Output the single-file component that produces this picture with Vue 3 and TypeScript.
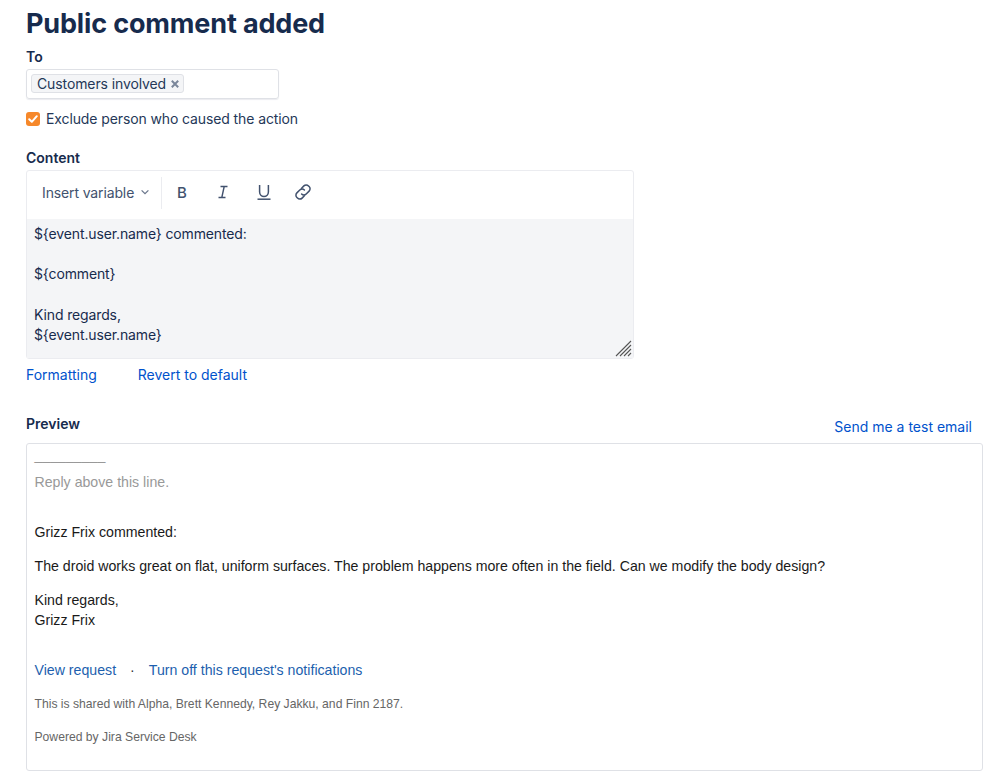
<script setup lang="ts">
const templateLines: string[] = ['${event.user.name} commented:', '', '${comment}', '', 'Kind regards,', '${event.user.name}']
</script>

<template>
  <main class="page">
    <h1 class="title">Public comment added</h1>

    <label class="label to-label">To</label>
    <div class="to-box">
      <span class="tag">Customers involved
        <svg class="tag-x" width="10" height="10" viewBox="0 0 10 10"><path d="M1.8 1.8l6.4 6.4M8.2 1.8l-6.4 6.4" stroke="#7a869a" stroke-width="2" stroke-linecap="butt" /></svg>
      </span>
    </div>

    <div class="check-row">
      <span class="check">
        <svg width="14" height="14" viewBox="0 0 14 14"><path d="M3.2 7.2l2.6 2.6 5-5.6" fill="none" stroke="#fff" stroke-width="2" stroke-linecap="round" stroke-linejoin="round" /></svg>
      </span>
      <span>Exclude person who caused the action</span>
    </div>

    <label class="label content-label">Content</label>
    <section class="editor">
      <div class="toolbar">
        <button class="insert">Insert variable
          <svg width="10" height="10" viewBox="0 0 10 10"><path d="M1.6 3.4L5 6.6l3.4-3.2" fill="none" stroke="#6b778c" stroke-width="1.3" /></svg>
        </button>
        <span class="divider"></span>
        <div class="tools">
          <span class="tool tool-b">B</span>
          <svg class="tool-svg" width="16" height="16" viewBox="0 0 16 16"><path d="M5.5 2.5h7M3.5 13.5h7M9.2 2.5L6.8 13.5" fill="none" stroke="#42526e" stroke-width="1.4" /></svg>
          <svg class="tool-svg" width="16" height="18" viewBox="0 0 16 18"><path d="M3.6 2v7a4.4 4.4 0 0 0 8.8 0V2" fill="none" stroke="#42526e" stroke-width="1.5" /><path d="M1.5 16.2h13" stroke="#42526e" stroke-width="1.5" /></svg>
          <svg class="tool-svg tool-link" width="18" height="18" viewBox="0 0 18 18"><g fill="none" stroke="#42526e" stroke-width="1.5" stroke-linecap="round"><path d="M7.6 5.2l2.3-2.3a3.2 3.2 0 0 1 4.6 0l.6.6a3.2 3.2 0 0 1 0 4.6l-2.9 2.9a3.2 3.2 0 0 1-4.6 0" /><path d="M10.4 12.8l-2.3 2.3a3.2 3.2 0 0 1-4.6 0l-.6-.6a3.2 3.2 0 0 1 0-4.6l2.9-2.9a3.2 3.2 0 0 1 4.6 0" /></g></svg>
        </div>
      </div>
      <div class="template">
        <div v-for="(line, i) in templateLines" :key="i" class="template-line">{{ line }}</div>
        <svg class="grip" width="17" height="17" viewBox="0 0 17 17"><path d="M1 16L16 1M5 16L16 5M9 16l7-7M13 16l3-3" stroke="#555" stroke-width="1.1" /></svg>
      </div>
    </section>

    <div class="editor-links">
      <a class="link">Formatting</a>
      <a class="link">Revert to default</a>
    </div>

    <div class="preview-head">
      <label class="label">Preview</label>
      <a class="link">Send me a test email</a>
    </div>

    <section class="preview">
      <p class="rule">_________</p>
      <p class="reply">Reply above this line.</p>
      <p class="p-commented">Grizz Frix commented:</p>
      <p class="p-body">The droid works great on flat, uniform surfaces. The problem happens more often in the field. Can we modify the body design?</p>
      <p class="p-body">Kind regards,<br />Grizz Frix</p>
      <p class="mail-links"><a>View request</a><span class="dot">·</span><a>Turn off this request's notifications</a></p>
      <p class="small shared">This is shared with Alpha, Brett Kennedy, Rey Jakku, and Finn 2187.</p>
      <p class="small powered">Powered by Jira Service Desk</p>
    </section>
  </main>
</template>

<style scoped>
.page {
  box-sizing: border-box;
  width: 999px;
  height: 782px;
  padding: 0 16px 0 26px;
  overflow: hidden;
  font-family: Inter, "Liberation Sans", sans-serif;
  font-size: 14px;
  color: #172b4d;
  background: #fff;
}
.title {
  margin: 0;
  padding-top: 7px;
  font-size: 27px;
  line-height: 34px;
  font-weight: 700;
  letter-spacing: -0.15px;
  color: #172b4d;
}
.label {
  display: block;
  font-size: 14px;
  line-height: 18px;
  font-weight: 600;
  color: #172b4d;
}
.to-label { margin-top: 7px; }
.to-box {
  box-sizing: border-box;
  display: flex;
  align-items: center;
  width: 253px;
  height: 30px;
  margin-top: 3px;
  padding-left: 4px;
  padding-bottom: 1px;
  border: 1px solid #dfe1e6;
  border-radius: 3px;
  box-shadow: 0 1px 1px #ebecf0;
}
.tag {
  display: flex;
  align-items: center;
  gap: 4px;
  height: 17px;
  padding: 0 3px 0 5px;
  border: 1px solid #dfe1e6;
  border-radius: 3px;
  background: #f4f5f7;
  color: #253858;
  font-size: 14px;
  letter-spacing: -0.11px;
  line-height: 17px;
}
.tag-x { flex: none; }
.check-row {
  display: flex;
  align-items: center;
  gap: 6px;
  margin-top: 10px;
  height: 18px;
  color: #253858;
  letter-spacing: -0.11px;
}
.check {
  display: flex;
  align-items: center;
  justify-content: center;
  width: 14px;
  height: 14px;
  margin-top: 2px;
  border-radius: 3px;
  background: #f6882a;
}
.content-label { margin-top: 22px; }
.editor {
  width: 608px;
  margin-top: 3px;
  border: 1px solid #ebecf0;
  border-radius: 3px;
  box-sizing: border-box;
}
.toolbar {
  display: flex;
  align-items: center;
  height: 48px;
}
.insert {
  display: flex;
  align-items: center;
  gap: 6px;
  padding: 0 0 0 15px;
  margin-top: -6px;
  border: 0;
  background: none;
  font: inherit;
  letter-spacing: -0.13px;
  color: #42526e;
  width: 134px;
}
.divider {
  width: 1px;
  height: 32px;
  margin-top: -4px;
  background: #ebecf0;
}
.tools {
  display: flex;
  align-items: center;
  gap: 25px;
  margin-left: 15px;
  margin-top: -6px;
}
.tool-b { font-size: 15px; font-weight: 500; color: #42526e; width: 13px; }
.tool-svg { flex: none; }
.tool-link { margin-left: -3px; }
.template {
  position: relative;
  box-sizing: border-box;
  height: 139px;
  padding: 5px 7px;
  background: #f4f5f7;
  color: #172b4d;
  letter-spacing: -0.13px;
}
.template-line {
  height: 20.2px;
  line-height: 20px;
}
.grip {
  position: absolute;
  right: 1px;
  bottom: 1px;
}
.editor-links {
  display: flex;
  gap: 41px;
  margin-top: 6px;
  line-height: 20px;
}
.link { color: #0052cc; }
.preview-head {
  display: flex;
  justify-content: space-between;
  align-items: flex-end;
  margin-top: 32px;
  padding-right: 11px;
  line-height: 20px;
}
.preview-head .label { position: relative; top: -4px; }
.preview {
  box-sizing: border-box;
  height: 328px;
  margin-top: 6px;
  padding: 1px 8px 8px 7.5px;
  border: 1px solid #dfe1e6;
  border-radius: 3px;
  font-family: "Liberation Sans", Arial, sans-serif;
  font-size: 14.16px;
  line-height: 20px;
  color: #1a1a1a;
}
.preview p { margin: 0; }
.preview .rule { color: #999; }
.preview .reply { margin-top: 7px; color: #999; }
.preview .p-commented { margin-top: 30px; }
.preview .p-body { margin-top: 14px; }
.preview .mail-links { margin-top: 30px; color: #1d5fae; }
.mail-links a { color: #1d5fae; }
.dot { margin: 0 14px; color: #333; }
.small { font-size: 12.16px; color: #666; }
.preview .shared { margin-top: 14px; }
.preview .powered { margin-top: 13px; }
</style>
